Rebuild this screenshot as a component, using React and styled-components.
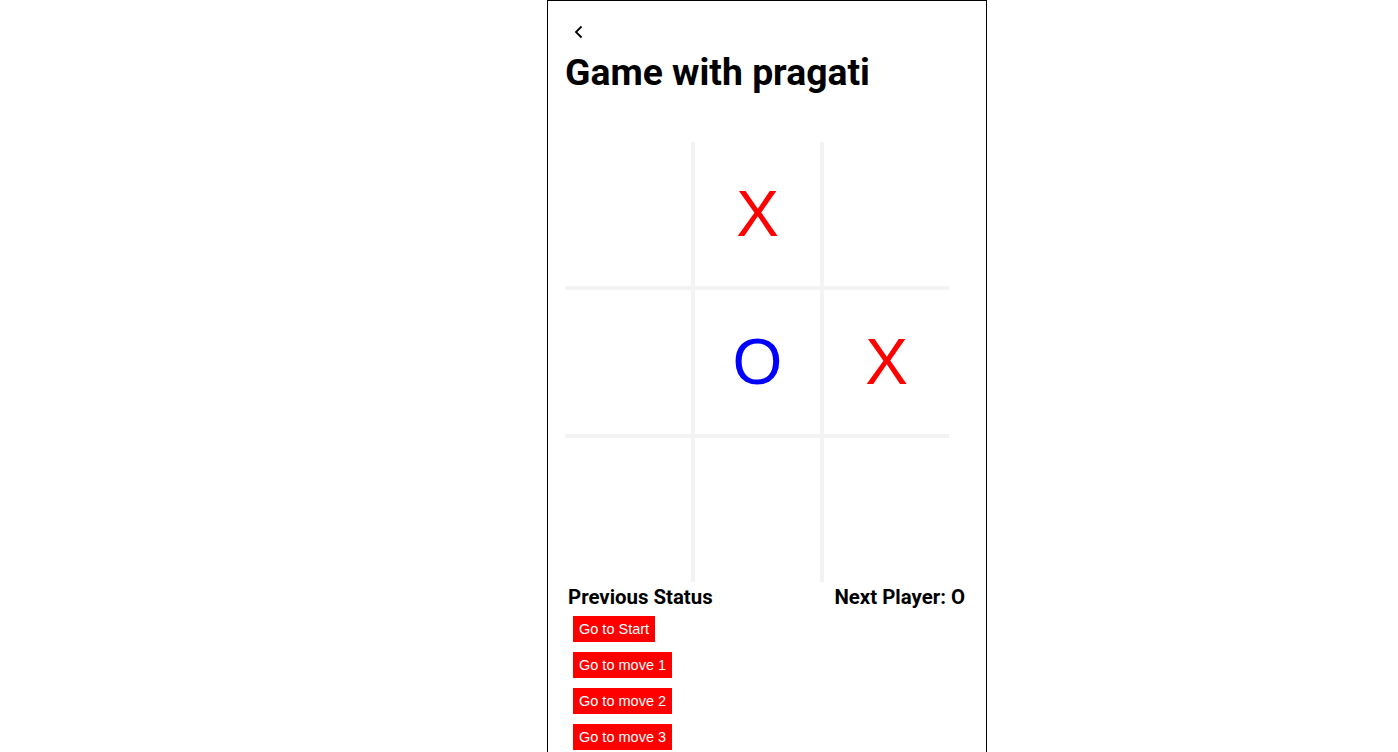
import React from 'react'
import styled, { createGlobalStyle } from 'styled-components'

const GlobalStyle = createGlobalStyle`
  body {
    margin: 0;
    background: #fff;
    font-family: Roboto, "Liberation Sans", sans-serif;
  }
`

const Container = styled.div`
  box-sizing: border-box;
  width: 440px;
  min-height: 790px;
  margin-left: 547px;
  border: 1px solid #000;
  background: #fff;
`

const Header = styled.div`
  padding: 24px 0 0 18px;
`

const BackButton = styled.button`
  display: block;
  border: none;
  background: none;
  padding: 0;
  margin-left: 7px;
  width: 12px;
  height: 15px;
  cursor: pointer;
`

const Title = styled.h1`
  margin: 10px 0 0 -1px;
  font-size: 37.3px;
  font-weight: 700;
  line-height: 44px;
  color: #000;
`

const Board = styled.div`
  display: grid;
  grid-template-columns: 126px 125px 125px;
  grid-template-rows: repeat(3, 144px);
  gap: 4px;
  width: 384px;
  margin: 48px 0 0 17px;
  background: #f3f3f3;
`

const Cell = styled.div`
  display: flex;
  align-items: center;
  justify-content: center;
  background: #fff;
  font-family: "Liberation Sans", Arial, sans-serif;
  font-size: 64px;
  color: ${p => (p.value === 'X' ? '#ff0000' : '#0000ff')};
  cursor: pointer;
`

const StatusRow = styled.div`
  display: flex;
  justify-content: space-between;
  padding: 3px 21px 0 20px;
`

const StatusText = styled.h3`
  margin: 0;
  font-size: 20.4px;
  font-weight: 700;
  line-height: 24px;
  color: #000;
`

const MoveList = styled.div`
  display: flex;
  flex-direction: column;
  align-items: flex-start;
  gap: 10px;
  padding: 7px 0 0 25px;
`

const MoveButton = styled.button`
  height: 26px;
  padding: 0 6px;
  border: none;
  background: #ff0000;
  color: #fff;
  font-family: "Liberation Sans", Arial, sans-serif;
  font-size: 14.5px;
  cursor: pointer;
`

const squares = [null, 'X', null, null, 'O', 'X', null, null, null]
const moves = ['Go to Start', 'Go to move 1', 'Go to move 2', 'Go to move 3']

const App = () => {
  return (
    <>
      <GlobalStyle />
      <Container>
        <Header>
          <BackButton aria-label="back">
            <svg width="10" height="14" viewBox="0 0 10 14" fill="none">
              <path d="M7.5 1.5 L2 7 L7.5 12.5" stroke="#000" strokeWidth="1.8" />
            </svg>
          </BackButton>
          <Title>Game with pragati</Title>
        </Header>
        <Board>
          {squares.map((v, i) => (
            <Cell key={i} value={v}>{v}</Cell>
          ))}
        </Board>
        <StatusRow>
          <StatusText>Previous Status</StatusText>
          <StatusText>Next Player: O</StatusText>
        </StatusRow>
        <MoveList>
          {moves.map(m => (
            <MoveButton key={m}>{m}</MoveButton>
          ))}
        </MoveList>
      </Container>
    </>
  )
}

export default App
